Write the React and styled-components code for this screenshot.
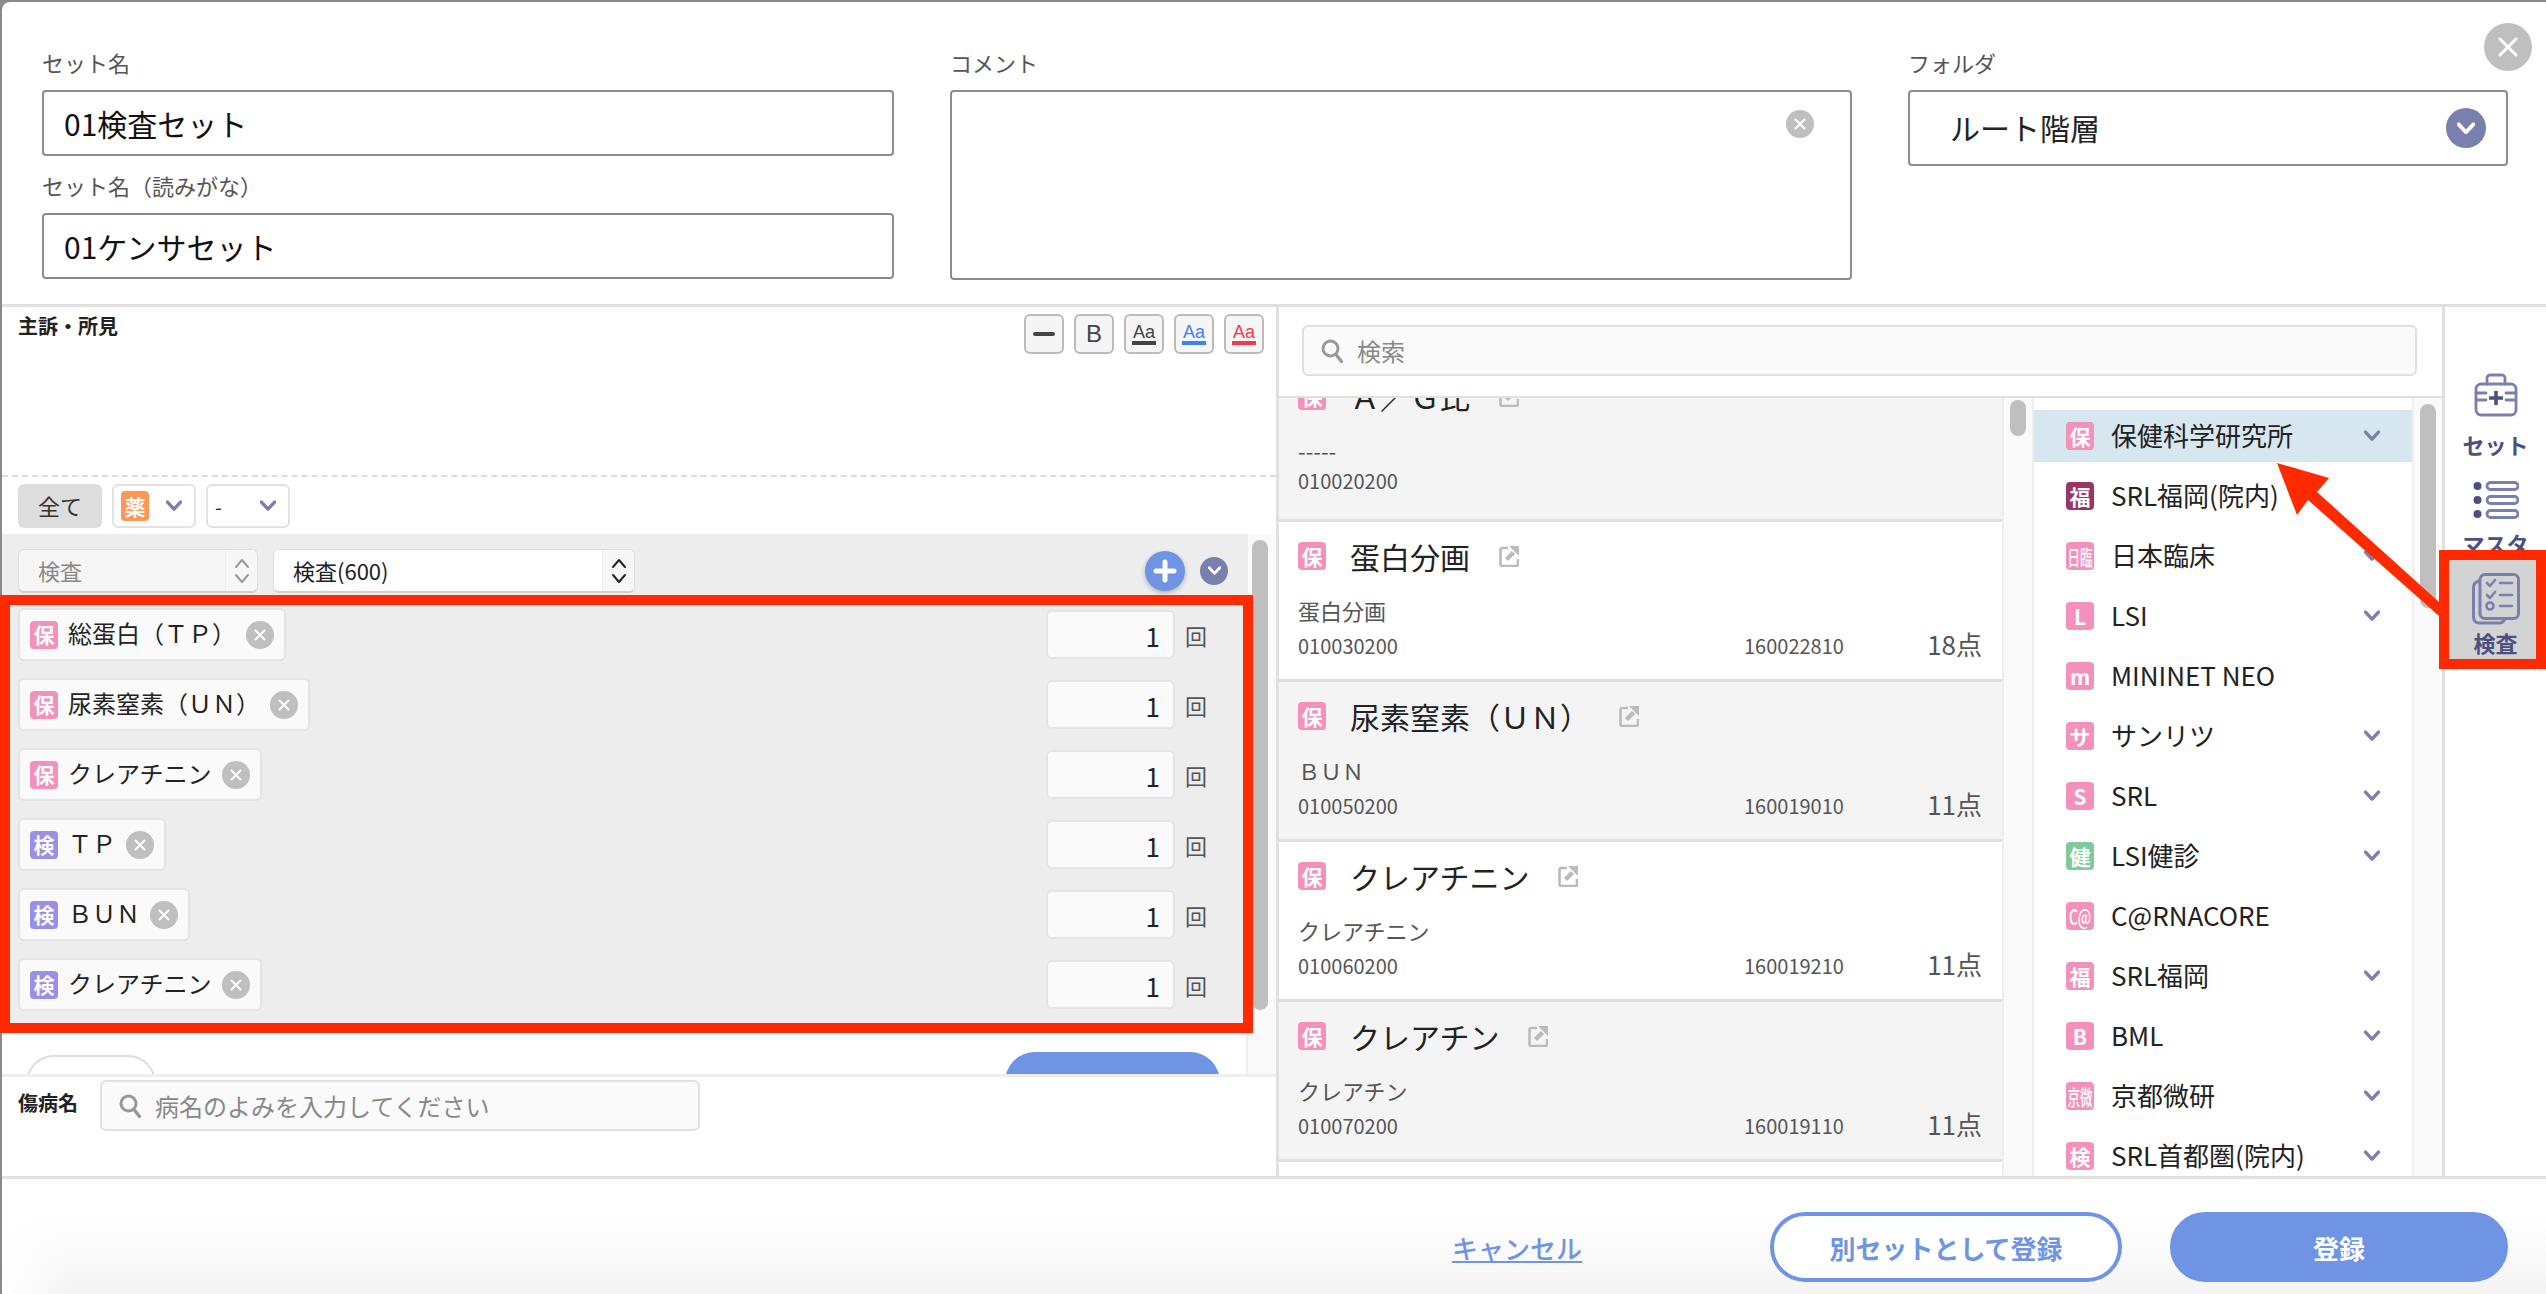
import React from 'react';
import styled, { createGlobalStyle } from 'styled-components';

const GlobalStyle = createGlobalStyle`
  html, body {
    margin: 0;
    padding: 0;
    overflow: hidden;
    background: #8a8a8a;
  }
  * {
    box-sizing: border-box;
  }
  body, input {
    font-family: "Noto Sans CJK JP", "Noto Sans", sans-serif;
  }
`;

const PINK = '#f490bc';
const PURPLE = '#9a8fe6';
const WINE = '#9b3565';
const GREEN = '#7fca9b';
const ORANGE = '#ff9658';
const NAVY = '#7a80ad';
const BLUE = '#6f94e4';

const Screen = styled.div`
  position: relative;
  width: 2546px;
  height: 1294px;
  padding: 2px 0 0 2px;
`;

const Modal = styled.div`
  position: relative;
  display: flex;
  flex-direction: column;
  width: 2544px;
  height: 1292px;
  background: #fff;
  border-radius: 8px 0 0 0;
  overflow: hidden;
`;

/* header */
const Header = styled.div`
  display: flex;
  flex: none;
  height: 305px;
  padding: 45px 0 0 40px;
  border-bottom: 3px solid #e0e0e0;
`;

const FieldColumn = styled.div`
  display: flex;
  flex-direction: column;
  flex: none;
  width: ${p => p.$width}px;
  margin-right: ${p => p.$gap || 0}px;
`;

const Label = styled.label`
  display: block;
  height: 30px;
  margin-bottom: ${p => p.$after || 13}px;
  font-size: 22px;
  line-height: 30px;
  color: #555;
`;

const TextBox = styled.input`
  display: block;
  width: 100%;
  height: 66px;
  margin-bottom: ${p => p.$after || 0}px;
  padding: 0 20px;
  border: 2px solid #8c8c8c;
  border-radius: 4px;
  background: #fff;
  font-size: 30px;
  color: #111;
  outline: none;
`;

const CommentBox = styled.div`
  position: relative;
  height: 190px;
  border: 2px solid #8c8c8c;
  border-radius: 4px;
`;

const FolderBox = styled.div`
  display: flex;
  align-items: center;
  justify-content: space-between;
  height: 76px;
  padding: 0 20px 0 40px;
  border: 2px solid #8c8c8c;
  border-radius: 4px;
  font-size: 30px;
  color: #222;
`;

const FolderText = styled.span`
  padding-bottom: 3px;
`;

const RoundChevron = styled.span`
  display: flex;
  align-items: center;
  justify-content: center;
  flex: none;
  width: ${p => p.$size}px;
  height: ${p => p.$size}px;
  border-radius: 50%;
  background: ${NAVY};
`;

const CloseButton = styled.button`
  position: absolute;
  top: 21px;
  right: 14px;
  display: flex;
  align-items: center;
  justify-content: center;
  width: 48px;
  height: 48px;
  padding: 0;
  border: none;
  border-radius: 50%;
  background: #bfbfbf;
`;

const CommentClear = styled.span`
  position: absolute;
  top: 18px;
  right: 36px;
  display: flex;
`;

/* body */
const Body = styled.div`
  display: flex;
  flex: none;
  height: 869px;
`;

const LeftPanel = styled.div`
  display: flex;
  flex-direction: column;
  flex: none;
  width: 1277px;
  border-right: 3px solid #e0e0e0;
`;

const NoteArea = styled.div`
  display: flex;
  align-items: flex-start;
  justify-content: space-between;
  flex: none;
  height: 170px;
  padding: 7px 12px 0 16px;
  border-bottom: 2px dashed #dcdcdc;
`;

const SectionTitle = styled.div`
  font-size: 20px;
  font-weight: 700;
  line-height: 24px;
  color: #222;
`;

const ToolBar = styled.div`
  display: flex;
  gap: 10px;
`;

const ToolButton = styled.button`
  display: flex;
  flex-direction: column;
  align-items: center;
  justify-content: center;
  width: 40px;
  height: 40px;
  padding: 0;
  border: 2px solid #bbb;
  border-radius: 6px;
  background: #f5f5f5;
  font-family: "Liberation Sans", sans-serif;
  font-size: ${p => (p.$bold ? 24 : 18)}px;
  line-height: 16px;
  color: ${p => p.$color || '#444'};
  &::after {
    content: '';
    display: ${p => (p.$underline ? 'block' : 'none')};
    width: 24px;
    height: 4px;
    margin-top: 1px;
    background: ${p => p.$color};
  }
`;

const MinusMark = styled.span`
  display: block;
  width: 22px;
  height: 4px;
  border-radius: 2px;
  background: #444;
`;

const FilterRow = styled.div`
  display: flex;
  flex: none;
  gap: 10px;
  height: 57px;
  padding: 7px 0 0 16px;
`;

const AllButton = styled.div`
  display: flex;
  align-items: center;
  justify-content: center;
  width: 84px;
  height: 44px;
  padding-bottom: 2px;
  border-radius: 6px;
  background: #ddd;
  font-size: 22px;
  color: #333;
`;

const FilterSelect = styled.div`
  display: flex;
  align-items: center;
  justify-content: space-between;
  width: 84px;
  height: 44px;
  padding: 0 12px 0 7px;
  border: 2px solid #e2e2e2;
  border-radius: 6px;
  font-size: 20px;
  color: #333;
`;

const OrderScroll = styled.div`
  display: flex;
  flex: none;
  height: 540px;
  overflow: hidden;
`;

const OrderContent = styled.div`
  display: flex;
  flex-direction: column;
  flex: none;
  width: 1244px;
  height: 540px;
`;

const OrderGray = styled.div`
  flex: none;
  height: 497px;
  padding-top: 15px;
  background: #ededed;
`;

const SelectRow = styled.div`
  display: flex;
  align-items: center;
  gap: 15px;
  height: 44px;
  margin-bottom: 15px;
  padding: 0 18px 0 16px;
`;

const StepSelect = styled.div`
  display: flex;
  align-items: center;
  flex: none;
  width: ${p => p.$width}px;
  height: 44px;
  padding-left: 19px;
  border: 1px solid #ddd;
  border-bottom: 2px solid #cfcfcf;
  border-radius: 6px;
  background: ${p => (p.$muted ? '#f6f6f6' : '#fff')};
  font-size: 22px;
  color: ${p => (p.$muted ? '#888' : '#222')};
`;

const SelectText = styled.span`
  flex: 1;
  padding-bottom: 2px;
`;

const Stepper = styled.span`
  display: flex;
  align-items: center;
  justify-content: center;
  flex: none;
  width: 32px;
  height: 100%;
  border-left: 1px solid #eee;
  background: #f7f7f7;
  border-radius: 0 6px 6px 0;
`;

const SelectTools = styled.div`
  display: flex;
  align-items: center;
  gap: 15px;
  margin-left: auto;
`;

const PlusButton = styled.span`
  display: flex;
  align-items: center;
  justify-content: center;
  width: 40px;
  height: 40px;
  border-radius: 50%;
  background: ${BLUE};
  box-shadow: 0 2px 5px rgba(0, 0, 0, 0.25);
`;

const OrderRows = styled.div`
  display: flex;
  flex-direction: column;
  gap: 17px;
  padding: 0 39px 0 16px;
`;

const OrderRow = styled.div`
  display: flex;
  align-items: center;
  justify-content: space-between;
  height: 53px;
`;

const Chip = styled.div`
  display: flex;
  align-items: center;
  height: 53px;
  padding: 0 10px;
  border: 2px solid #e4e4e4;
  border-radius: 6px;
  background: #fafafa;
  font-size: 24px;
  color: #222;
`;

const ChipName = styled.span`
  margin: -5px 10px 0 10px;
  white-space: nowrap;
`;

const Quantity = styled.div`
  display: flex;
  align-items: center;
  gap: 10px;
  font-size: 22px;
  color: #555;
`;

const QuantityBox = styled.div`
  width: 129px;
  height: 49px;
  padding: 4px 13px 0 0;
  border: 2px solid #e4e4e4;
  border-radius: 6px;
  background: #fafafa;
  font-size: 26px;
  line-height: 40px;
  text-align: right;
  color: #222;
`;

const ClippedButtons = styled.div`
  display: flex;
  align-items: flex-start;
  justify-content: space-between;
  height: 43px;
  padding: 24px 26px 0 24px;
  overflow: hidden;
`;

const GhostPill = styled.div`
  width: 130px;
  height: 60px;
  border: 2px solid #ddd;
  border-radius: 28px;
`;

const BluePill = styled.div`
  width: 215px;
  height: 60px;
  margin-top: -3px;
  border-radius: 30px;
  background: ${BLUE};
`;

const ScrollTrack = styled.div`
  flex: none;
  width: ${p => p.$width}px;
  padding: ${p => p.$top}px 0 0 ${p => p.$left}px;
  border-left: 2px solid #eee;
  background: #fafafa;
`;

const ScrollThumb = styled.div`
  width: 16px;
  height: ${p => p.$height}px;
  border-radius: 8px;
  background: #bfbfbf;
`;

const DiseaseRow = styled.div`
  display: flex;
  flex: none;
  height: 102px;
  padding: 3px 0 0 16px;
  border-top: 3px solid #eee;
`;

const DiseaseTitle = styled(SectionTitle)`
  width: 82px;
  padding-top: 11px;
`;

const SearchBox = styled.div`
  display: flex;
  align-items: center;
  gap: 13px;
  width: ${p => (p.$width ? `${p.$width}px` : 'auto')};
  height: ${p => p.$height}px;
  padding-left: 16px;
  border: 2px solid #e0e0e0;
  border-radius: 6px;
  background: #fafafa;
  font-size: 24px;
  color: #888;
`;

/* master column */
const MasterPanel = styled.div`
  display: flex;
  flex-direction: column;
  flex: none;
  width: 1166px;
  border-right: 3px solid #e0e0e0;
`;

const SearchArea = styled.div`
  flex: none;
  height: 91px;
  padding: 18px 25px 0 23px;
  border-bottom: 2px solid #e0e0e0;
`;

const MasterColumns = styled.div`
  display: flex;
  height: 778px;
  overflow: hidden;
`;

const ItemList = styled.div`
  flex: none;
  width: 723px;
  height: 778px;
  overflow: hidden;
`;

const ItemStack = styled.div`
  margin-top: -36px;
`;

const Item = styled.div`
  height: 160px;
  padding: 13px 20px 0 19px;
  border-bottom: 3px solid #e0e0e0;
  background: ${p => (p.$shaded ? '#f4f4f4' : '#fff')};
`;

const ItemTitle = styled.div`
  display: flex;
  align-items: center;
  height: 42px;
  margin-bottom: 16px;
  font-size: 30px;
  color: #222;
`;

const ItemName = styled.span`
  margin: 0 29px 0 24px;
  white-space: nowrap;
`;

const ItemSub = styled.div`
  height: ${p => (p.$short ? 30 : 35)}px;
  font-size: 22px;
  line-height: 34px;
  color: #555;
`;

const ItemCodes = styled.div`
  display: grid;
  grid-template-columns: 446px 1fr auto;
  align-items: center;
  height: 34px;
  font-size: 20px;
  color: #555;
`;

const ItemPoints = styled.span`
  font-size: 26px;
  line-height: 30px;
  margin-top: -2px;
`;

const HospitalList = styled.div`
  flex: none;
  width: 380px;
  padding-top: 12px;
  border-left: 2px solid #eee;
  overflow: hidden;
`;

const HospitalRow = styled.div`
  display: flex;
  align-items: center;
  height: 52px;
  margin-bottom: 8px;
  padding: 0 32px 0 32px;
  background: ${p => (p.$active ? '#d7e7ef' : '#fff')};
  font-size: 26px;
  color: #222;
`;

const HospitalName = styled.span`
  flex: 1;
  margin-left: 17px;
  padding-bottom: 3px;
  white-space: nowrap;
`;

const Tag = styled.span`
  display: flex;
  align-items: center;
  justify-content: center;
  flex: none;
  width: 28px;
  height: ${p => p.$height || 28}px;
  border-radius: 4px;
  background: ${p => p.$color || PINK};
  overflow: hidden;
  font-size: 21px;
  font-weight: 700;
  line-height: 1;
  color: #fff;
`;

const TagText = styled.span`
  display: block;
  white-space: nowrap;
  transform: ${p => (p.$squeeze ? `scaleX(${p.$squeeze})` : 'none')};
  font-weight: ${p => (p.$squeeze ? 500 : 700)};
`;

/* right rail */
const Rail = styled.div`
  flex: none;
  width: 101px;
  padding-top: 55px;
`;

const RailItem = styled.div`
  display: flex;
  flex-direction: column;
  align-items: center;
  height: 99px;
  background: ${p => (p.$active ? '#d3d3d3' : 'transparent')};
`;

const RailIcon = styled.span`
  display: flex;
  align-items: center;
  justify-content: center;
  height: 74px;
  padding: 3px 0 ${p => p.$lift || 0}px;
`;

const RailLabel = styled.span`
  margin-top: -4px;
  font-size: 22px;
  font-weight: 700;
  line-height: 24px;
  color: #4a5082;
`;

/* footer */
const Footer = styled.div`
  display: flex;
  align-items: center;
  justify-content: flex-end;
  gap: 48px;
  flex: 1;
  padding: 33px 38px 12px 0;
  border-top: 3px solid #e0e0e0;
  background:
    linear-gradient(to right, #fff, rgba(255, 255, 255, 0) 70px),
    linear-gradient(#fff 30%, #f4f4f4);
`;

const CancelLink = styled.a`
  margin-right: 140px;
  font-size: 26px;
  font-weight: 500;
  color: ${BLUE};
  text-decoration: underline;
`;

const PillButton = styled.button`
  width: ${p => p.$width}px;
  height: 70px;
  border: 4px solid ${BLUE};
  border-radius: 35px;
  background: ${p => (p.$filled ? BLUE : '#fff')};
  font-family: inherit;
  font-size: 26px;
  font-weight: 700;
  color: ${p => (p.$filled ? '#fff' : BLUE)};
`;

/* annotations */
const RedFrame = styled.div`
  position: absolute;
  left: ${p => p.$left}px;
  top: ${p => p.$top}px;
  width: ${p => p.$width}px;
  height: ${p => p.$height}px;
  border: 10px solid #ff2a00;
  pointer-events: none;
`;

const ArrowOverlay = styled.svg`
  position: absolute;
  left: 2270px;
  top: 455px;
`;

function Chevron({ size = 16, color = NAVY, width = 3.4 }) {
  return (
    <svg width={size} height={size * 0.7} viewBox="0 0 16 11" fill="none">
      <polyline points="1.5,2 8,9 14.5,2" stroke={color} strokeWidth={width} strokeLinecap="round" strokeLinejoin="round" />
    </svg>
  );
}

function ClearIcon({ size = 28 }) {
  return (
    <svg width={size} height={size} viewBox="0 0 28 28" style={{ flex: 'none' }}>
      <circle cx="14" cy="14" r="14" fill="#bfbfbf" />
      <path d="M9.5 9.5l9 9M18.5 9.5l-9 9" stroke="#fff" strokeWidth="2" strokeLinecap="round" />
    </svg>
  );
}

function StepIcon({ color }) {
  return (
    <svg width="16" height="30" viewBox="0 0 16 30" fill="none">
      <polyline points="2,11 8,4 14,11" stroke={color} strokeWidth="2" strokeLinejoin="round" strokeLinecap="round" />
      <polyline points="2,19 8,26 14,19" stroke={color} strokeWidth="2" strokeLinejoin="round" strokeLinecap="round" />
    </svg>
  );
}

function SearchIcon() {
  return (
    <svg width="24" height="26" viewBox="0 0 24 26" fill="none" style={{ flex: 'none' }}>
      <circle cx="10.5" cy="10.5" r="7.5" stroke="#999" strokeWidth="3" />
      <path d="M16 16.5l5.5 7" stroke="#999" strokeWidth="3.4" strokeLinecap="round" />
    </svg>
  );
}

function LinkIcon() {
  return (
    <svg width="20" height="22" viewBox="0 0 20 22" fill="none" style={{ flex: 'none' }}>
      <path d="M9 3H3a1.500 1.500 0 0 0-1.500 1.500v15A1.500 1.500 0 0 0 3 21h14.500a1.500 1.500 0 0 0 1.500-1.500V14" stroke="#bbb" strokeWidth="2.6" />
      <path d="M7.500 14.500l7-7" stroke="#bbb" strokeWidth="4.500" />
      <path d="M10 1h10v10z" fill="#bbb" />
    </svg>
  );
}

function KitIcon() {
  return (
    <svg width="44" height="44" viewBox="0 0 44 44" fill="none" stroke={NAVY} strokeWidth="2.8" strokeLinejoin="round" strokeLinecap="round">
      <path d="M13 11V5a3 3 0 0 1 3-3h12a3 3 0 0 1 3 3v6" />
      <rect x="2" y="11" width="40" height="31" rx="5" />
      <path d="M2 20h10M2 27h10M32 20h10M32 27h10" />
      <path d="M22 18v14M15 25h14" stroke="#4a5082" strokeWidth="3.6" strokeLinecap="butt" />
    </svg>
  );
}

function ListIcon() {
  return (
    <svg width="46" height="40" viewBox="0 0 46 40" fill="none">
      {[2, 16, 30].map(y => (
        <g key={y}>
          <circle cx="4.5" cy={y + 4} r="4" fill="#4a5082" />
          <rect x="14" y={y + 0.5} width="31" height="7" rx="3.5" stroke={NAVY} strokeWidth="2.8" />
        </g>
      ))}
    </svg>
  );
}

function ChecklistIcon() {
  return (
    <svg width="48" height="52" viewBox="0 0 48 52" fill="none" stroke={NAVY} strokeLinecap="round" strokeLinejoin="round">
      <path d="M7 8C3.5 9 1.5 11 1.5 14v30c0 3.5 2 6 5.500 6h20c3 0 5-1.500 6-4.500" strokeWidth="3" />
      <rect x="8" y="1.500" width="38.500" height="44" rx="5" strokeWidth="3" />
      <path d="M15 10l3 3 5-6M15 22l3 3 5-6" strokeWidth="2.6" />
      <circle cx="18" cy="33" r="3.500" strokeWidth="2.6" />
      <path d="M28 10h12M28 22h12M28 33h12" strokeWidth="2.6" />
    </svg>
  );
}

const orders = [
  { tag: '保', color: PINK, name: '総蛋白（ＴＰ）' },
  { tag: '保', color: PINK, name: '尿素窒素（ＵＮ）' },
  { tag: '保', color: PINK, name: 'クレアチニン' },
  { tag: '検', color: PURPLE, name: 'ＴＰ' },
  { tag: '検', color: PURPLE, name: 'ＢＵＮ' },
  { tag: '検', color: PURPLE, name: 'クレアチニン' },
];

const items = [
  { name: 'Ａ／Ｇ比', sub: '-----', code: '010020200', short: true, shaded: true },
  { name: '蛋白分画', sub: '蛋白分画', code: '010030200', claim: '160022810', points: '18点' },
  { name: '尿素窒素（ＵＮ）', sub: 'ＢＵＮ', code: '010050200', claim: '160019010', points: '11点', shaded: true },
  { name: 'クレアチニン', sub: 'クレアチニン', code: '010060200', claim: '160019210', points: '11点' },
  { name: 'クレアチン', sub: 'クレアチン', code: '010070200', claim: '160019110', points: '11点', shaded: true },
  { name: '', sub: '', code: '' },
];

const hospitals = [
  { tag: '保', name: '保健科学研究所', more: true, active: true },
  { tag: '福', name: 'SRL福岡(院内)', color: WINE },
  { tag: '日臨', name: '日本臨床', more: true, squeeze: 0.6 },
  { tag: 'L', name: 'LSI', more: true },
  { tag: 'm', name: 'MININET NEO' },
  { tag: 'サ', name: 'サンリツ', more: true },
  { tag: 'S', name: 'SRL', more: true },
  { tag: '健', name: 'LSI健診', more: true, color: GREEN },
  { tag: 'C@', name: 'C@RNACORE', squeeze: 0.65 },
  { tag: '福', name: 'SRL福岡', more: true },
  { tag: 'B', name: 'BML', more: true },
  { tag: '京微', name: '京都微研', more: true, squeeze: 0.6 },
  { tag: '検', name: 'SRL首都圏(院内)', more: true },
];

export default function App() {
  return (
    <Screen>
      <GlobalStyle />
      <Modal>
        <Header>
          <FieldColumn $width={852} $gap={56}>
            <Label>セット名</Label>
            <TextBox readOnly value="01検査セット" $after={14} />
            <Label>セット名（読みがな）</Label>
            <TextBox readOnly value="01ケンサセット" />
          </FieldColumn>
          <FieldColumn $width={902} $gap={56}>
            <Label>コメント</Label>
            <CommentBox>
              <CommentClear><ClearIcon /></CommentClear>
            </CommentBox>
          </FieldColumn>
          <FieldColumn $width={600}>
            <Label>フォルダ</Label>
            <FolderBox>
              <FolderText>ルート階層</FolderText>
              <RoundChevron $size={40}><Chevron size={18} color="#fff" /></RoundChevron>
            </FolderBox>
          </FieldColumn>
        </Header>
        <CloseButton>
          <svg width="24" height="24" viewBox="0 0 24 24">
            <path d="M4 4l16 16M20 4L4 20" stroke="#fff" strokeWidth="3" strokeLinecap="round" />
          </svg>
        </CloseButton>

        <Body>
          <LeftPanel>
            <NoteArea>
              <SectionTitle>主訴・所見</SectionTitle>
              <ToolBar>
                <ToolButton><MinusMark /></ToolButton>
                <ToolButton $bold>B</ToolButton>
                <ToolButton $underline $color="#444">Aa</ToolButton>
                <ToolButton $underline $color="#3b82f6">Aa</ToolButton>
                <ToolButton $underline $color="#f43a4a">Aa</ToolButton>
              </ToolBar>
            </NoteArea>
            <FilterRow>
              <AllButton>全て</AllButton>
              <FilterSelect>
                <Tag $color={ORANGE} $height={30}><TagText>薬</TagText></Tag>
                <Chevron />
              </FilterSelect>
              <FilterSelect>
                -
                <Chevron />
              </FilterSelect>
            </FilterRow>
            <OrderScroll>
              <OrderContent>
                <OrderGray>
                  <SelectRow>
                    <StepSelect $width={240} $muted>
                      <SelectText>検査</SelectText>
                      <Stepper><StepIcon color="#999" /></Stepper>
                    </StepSelect>
                    <StepSelect $width={362}>
                      <SelectText>検査(600)</SelectText>
                      <Stepper><StepIcon color="#222" /></Stepper>
                    </StepSelect>
                    <SelectTools>
                      <PlusButton>
                        <svg width="24" height="24" viewBox="0 0 24 24">
                          <path d="M12 3v18M3 12h18" stroke="#fff" strokeWidth="5" strokeLinecap="round" />
                        </svg>
                      </PlusButton>
                      <RoundChevron $size={28}><Chevron size={13} color="#fff" /></RoundChevron>
                    </SelectTools>
                  </SelectRow>
                  <OrderRows>
                    {orders.map(order => (
                      <OrderRow key={order.tag + order.name}>
                        <Chip>
                          <Tag $color={order.color}><TagText>{order.tag}</TagText></Tag>
                          <ChipName>{order.name}</ChipName>
                          <ClearIcon />
                        </Chip>
                        <Quantity>
                          <QuantityBox>1</QuantityBox>
                          回
                        </Quantity>
                      </OrderRow>
                    ))}
                  </OrderRows>
                </OrderGray>
                <ClippedButtons>
                  <GhostPill />
                  <BluePill />
                </ClippedButtons>
              </OrderContent>
              <ScrollTrack $width={30} $top={6} $left={4}>
                <ScrollThumb $height={470} />
              </ScrollTrack>
            </OrderScroll>
            <DiseaseRow>
              <DiseaseTitle>傷病名</DiseaseTitle>
              <SearchBox $width={600} $height={51}>
                <SearchIcon />
                病名のよみを入力してください
              </SearchBox>
            </DiseaseRow>
          </LeftPanel>

          <MasterPanel>
            <SearchArea>
              <SearchBox $height={51}>
                <SearchIcon />
                検索
              </SearchBox>
            </SearchArea>
            <MasterColumns>
              <ItemList>
                <ItemStack>
                  {items.map((item, index) => (
                    <Item key={index} $shaded={item.shaded}>
                      {item.name && (
                        <>
                          <ItemTitle>
                            <Tag><TagText>保</TagText></Tag>
                            <ItemName>{item.name}</ItemName>
                            <LinkIcon />
                          </ItemTitle>
                          <ItemSub $short={item.short}>{item.sub}</ItemSub>
                          <ItemCodes>
                            <span>{item.code}</span>
                            <span>{item.claim}</span>
                            <ItemPoints>{item.points}</ItemPoints>
                          </ItemCodes>
                        </>
                      )}
                    </Item>
                  ))}
                </ItemStack>
              </ItemList>
              <ScrollTrack $width={30} $top={2} $left={6}>
                <ScrollThumb $height={36} />
              </ScrollTrack>
              <HospitalList>
                {hospitals.map(h => (
                  <HospitalRow key={h.name} $active={h.active}>
                    <Tag $color={h.color}><TagText $squeeze={h.squeeze}>{h.tag}</TagText></Tag>
                    <HospitalName>{h.name}</HospitalName>
                    {h.more && <Chevron />}
                  </HospitalRow>
                ))}
              </HospitalList>
              <ScrollTrack $width={30} $top={6} $left={6}>
                <ScrollThumb $height={204} />
              </ScrollTrack>
            </MasterColumns>
          </MasterPanel>

          <Rail>
            <RailItem>
              <RailIcon $lift={11}><KitIcon /></RailIcon>
              <RailLabel>セット</RailLabel>
            </RailItem>
            <RailItem>
              <RailIcon><ListIcon /></RailIcon>
              <RailLabel>マスタ</RailLabel>
            </RailItem>
            <RailItem $active>
              <RailIcon><ChecklistIcon /></RailIcon>
              <RailLabel>検査</RailLabel>
            </RailItem>
          </Rail>
        </Body>

        <Footer>
          <CancelLink>キャンセル</CancelLink>
          <PillButton $width={352}>別セットとして登録</PillButton>
          <PillButton $width={338} $filled>登録</PillButton>
        </Footer>
      </Modal>

      <RedFrame $left={0} $top={595} $width={1253} $height={438} />
      <RedFrame $left={2439} $top={550} $width={107} $height={119} />
      <ArrowOverlay width="180" height="170" viewBox="0 0 180 170">
        <polygon points="7,8 59,23 47,37 169,147 169,161 38,45 27,60" fill="#ff2a00" />
      </ArrowOverlay>
    </Screen>
  );
}
